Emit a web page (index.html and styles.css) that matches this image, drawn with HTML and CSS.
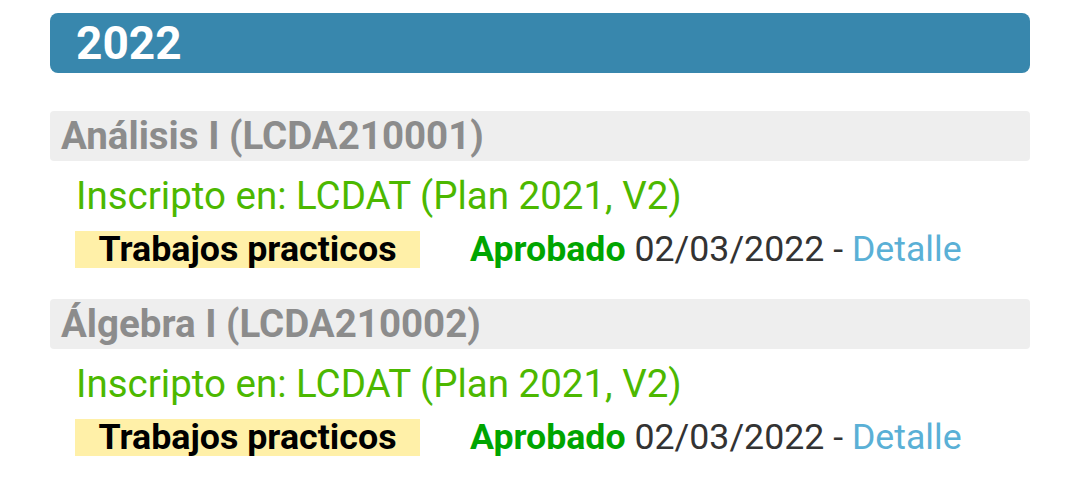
FILE: index.html
```html
<!DOCTYPE html>
<html lang="es">
<head>
<meta charset="utf-8">
<link rel="stylesheet" href="styles.css">
</head>
<body>
<div class="page">
  <div class="year">2022</div>
  <div class="materia">
    <div class="materia-title">Análisis I (LCDA210001)</div>
    <div class="inscripto">Inscripto en: LCDAT (Plan 2021, V2)</div>
    <div class="row">
      <span class="tipo">Trabajos practicos</span>
      <span class="estado"><b class="aprobado">Aprobado</b> 02/03/2022 - <a class="detalle">Detalle</a></span>
    </div>
  </div>
  <div class="materia">
    <div class="materia-title">Álgebra I (LCDA210002)</div>
    <div class="inscripto">Inscripto en: LCDAT (Plan 2021, V2)</div>
    <div class="row">
      <span class="tipo">Trabajos practicos</span>
      <span class="estado"><b class="aprobado">Aprobado</b> 02/03/2022 - <a class="detalle">Detalle</a></span>
    </div>
  </div>
</div>
</body>
</html>
```
FILE: styles.css
```css
html, body { margin: 0; padding: 0; background: #fff; }
body { font-family: Roboto, "Liberation Sans", sans-serif; }
.page { padding: 13px 50px 0 50px; display: flex; flex-direction: column; }
.year {
  height: 60px; line-height: 60px; background: #3887ad; color: #fff;
  border-radius: 8px; font-weight: 700; font-size: 46px; padding-left: 26px;
  margin-bottom: 38px;
}
.materia { display: flex; flex-direction: column; margin-bottom: 31px; }
.materia-title {
  height: 50px; line-height: 50px; background: #eeeeee; border-radius: 4px;
  color: #8c8c8c; font-weight: 700; font-size: 38.5px; padding-left: 11px;
}
.inscripto { color: #4cb800; font-size: 38.5px; line-height: 44px; margin-top: 13px; padding-left: 26px; }
.row { display: flex; align-items: center; height: 37px; margin-top: 13px; padding-left: 25px; }
.tipo {
  width: 345px; height: 37px; line-height: 37px; background: #fff0a8; color: #000;
  font-weight: 700; font-size: 35.8px; text-align: center;
}
.estado { margin-left: 50px; font-size: 35.7px; line-height: 37px; color: #333; }
.aprobado { color: #00a500; font-weight: 700; }
.detalle { color: #5ab0d6; }
```
